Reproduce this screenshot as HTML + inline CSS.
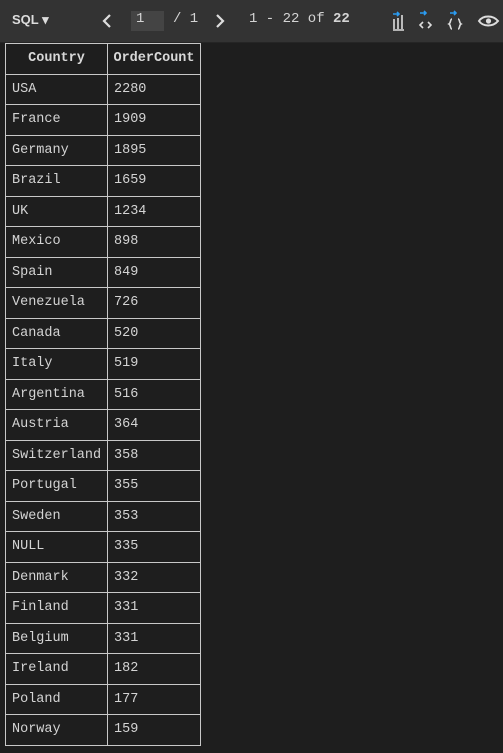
<!DOCTYPE html>
<html><head><style>
body{margin:0;background:#1e1e1e;width:503px;height:753px;overflow:hidden;font-family:"Liberation Mono",monospace;color:#d4d4d4;}
.bar{position:absolute;left:0;top:0;width:503px;height:42px;background:#333;border-bottom:1px solid #252525;font-size:14px;}
.bar span{position:absolute;top:11px;}
table{position:absolute;left:5px;top:43px;border-collapse:collapse;font-size:13.5px;table-layout:fixed;width:196px;}
td,th{border:1px solid #c8c8c8;height:29.5px;padding:0 6px;text-align:left;white-space:nowrap;overflow:hidden;}
th{text-align:center;font-weight:bold;color:#d8d8d8;padding:0 3px;}
col.a{width:102px}
col.b{width:93px}
</style></head><body>
<div class="bar">
<span style="left:12px;font-weight:bold;font-family:'Liberation Sans',sans-serif;color:#ddd;font-size:13px;top:12px">SQL ▾</span>
<svg style="position:absolute;left:100px;top:13px" width="14" height="16"><path d="M10 2L4 8l6 6" fill="none" stroke="#ddd" stroke-width="2.2"/></svg>
<div style="position:absolute;left:131px;top:11px;width:33px;height:20px;background:#444"></div>
<span style="left:136px">1</span>
<span style="left:173px">/ 1</span>
<svg style="position:absolute;left:213px;top:13px" width="14" height="16"><path d="M4 2l6 6-6 6" fill="none" stroke="#ddd" stroke-width="2.2"/></svg>
<span style="left:249px">1 - 22 of <b>22</b></span>
<svg style="position:absolute;left:390px;top:9px" width="110" height="24" viewBox="0 0 110 24">
<g fill="none" stroke-width="1.6">
<path d="M3 5h6M7 3l2 2-2 2" stroke="#2b9cf2"/>
<path d="M4 20V10M8 20V9M12 20V6M3 21h11" stroke="#ddd"/>
<path d="M30 4h6M34 2l2 2-2 2" stroke="#2b9cf2"/>
<path d="M33 13l-3 3 3 3M38 13l3 3-3 3" stroke="#ddd"/>
<path d="M60 4h6M64 2l2 2-2 2" stroke="#2b9cf2"/>
<path d="M62 10c-2 0-1 4-3 5 2 1 1 5 3 5M68 10c2 0 1 4 3 5-2 1-1 5-3 5" stroke="#ddd"/>
<path d="M89 12c4-6 14-6 19 0-5 6-15 6-19 0z" stroke="#ddd" stroke-width="2"/>
</g><circle cx="98.5" cy="12" r="2.6" fill="#ddd"/>
</svg>
</div>
<table><colgroup><col class="a"><col class="b"></colgroup>
<tr><th>Country</th><th>OrderCount</th></tr>
<tr><td>USA</td><td>2280</td></tr>
<tr><td>France</td><td>1909</td></tr>
<tr><td>Germany</td><td>1895</td></tr>
<tr><td>Brazil</td><td>1659</td></tr>
<tr><td>UK</td><td>1234</td></tr>
<tr><td>Mexico</td><td>898</td></tr>
<tr><td>Spain</td><td>849</td></tr>
<tr><td>Venezuela</td><td>726</td></tr>
<tr><td>Canada</td><td>520</td></tr>
<tr><td>Italy</td><td>519</td></tr>
<tr><td>Argentina</td><td>516</td></tr>
<tr><td>Austria</td><td>364</td></tr>
<tr><td>Switzerland</td><td>358</td></tr>
<tr><td>Portugal</td><td>355</td></tr>
<tr><td>Sweden</td><td>353</td></tr>
<tr><td>NULL</td><td>335</td></tr>
<tr><td>Denmark</td><td>332</td></tr>
<tr><td>Finland</td><td>331</td></tr>
<tr><td>Belgium</td><td>331</td></tr>
<tr><td>Ireland</td><td>182</td></tr>
<tr><td>Poland</td><td>177</td></tr>
<tr><td>Norway</td><td>159</td></tr>
</table>
</body></html>
